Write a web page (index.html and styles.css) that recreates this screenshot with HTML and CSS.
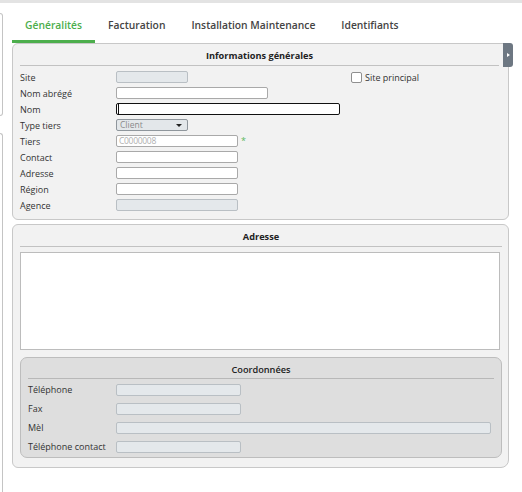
FILE: index.html
```html
<!DOCTYPE html>
<html lang="fr">

<head>
    <meta charset="UTF-8">
    <meta name="viewport" content="width=device-width, initial-scale=1.0">
    <title>Site</title>

    <!--Style-->

    <link rel="stylesheet" href="styles.css">
</head>

<body>
    <div class="topBar"></div>
    <div class="page">
        <div class="sideEdge">
            <div class="sideBoxTop"></div>
            <div class="sideBoxBottom"></div>
        </div>

        <div class="mainContainer">
            <div class="tabs">
                <div class="tab active">Généralités</div>
                <div class="tab">Facturation</div>
                <div class="tab">Installation Maintenance</div>
                <div class="tab">Identifiants</div>
            </div>

            <!--Informations générales-->

            <div class="panel infoPanel">
                <div class="panelTitle">Informations générales</div>
                <div class="panelRule"></div>
                <div class="toggleButton"><span class="toggleArrow"></span></div>

                <div class="row">
                    <label>Site</label>
                    <div class="field disabled w72"></div>
                    <div class="check"><span class="checkBox"></span>Site principal</div>
                </div>
                <div class="row">
                    <label>Nom abrégé</label>
                    <div class="field w152"></div>
                </div>
                <div class="row">
                    <label>Nom</label>
                    <div class="field focused w224"><span class="caret"></span></div>
                </div>
                <div class="row">
                    <label>Type tiers</label>
                    <div class="field select w72">Client<span class="selectArrow"></span></div>
                </div>
                <div class="row">
                    <label>Tiers</label>
                    <div class="field placeholder w122">C0000008</div>
                    <span class="required">*</span>
                </div>
                <div class="row">
                    <label>Contact</label>
                    <div class="field w122"></div>
                </div>
                <div class="row">
                    <label>Adresse</label>
                    <div class="field w122"></div>
                </div>
                <div class="row">
                    <label>Région</label>
                    <div class="field w122"></div>
                </div>
                <div class="row">
                    <label>Agence</label>
                    <div class="field disabled w122"></div>
                </div>
            </div>

            <!--Adresse-->

            <div class="panel addressPanel">
                <div class="panelTitle">Adresse</div>
                <div class="panelRule"></div>
                <div class="addressBox"></div>

                <div class="subPanel">
                    <div class="panelTitle subTitle">Coordonnées</div>
                    <div class="panelRule"></div>

                    <div class="row subRow">
                        <label>Téléphone</label>
                        <div class="field disabled w125"></div>
                    </div>
                    <div class="row subRow">
                        <label>Fax</label>
                        <div class="field disabled w125"></div>
                    </div>
                    <div class="row subRow">
                        <label>Mèl</label>
                        <div class="field disabled wide"></div>
                    </div>
                    <div class="row subRow">
                        <label>Téléphone contact</label>
                        <div class="field disabled w125"></div>
                    </div>
                </div>
            </div>
        </div>
    </div>
</body>

</html>
```

FILE: styles.css
```css
body {
    margin: 0;
    font-family: "Open Sans", "DejaVu Sans", sans-serif;
    color: #333;
    background-color: white;
    width: 522px;
    height: 492px;
    overflow: hidden;
}

.topBar {
    height: 3px;
    background-color: #e3e3e3;
}

.page {
    display: flex;
    height: 489px;
}

/* bits of the neighbour panel cut off at the left */

.sideEdge {
    width: 3px;
    display: flex;
    flex-direction: column;
}

.sideBoxTop {
    margin-top: 10px;
    height: 101px;
    border: 1px solid #c4c4c4;
    border-left: none;
    border-radius: 0 5px 5px 0;
}

.sideBoxBottom {
    margin-top: 17px;
    flex: 1;
    border: 1px solid #c4c4c4;
    border-left: none;
    border-bottom: none;
    border-radius: 0 5px 0 0;
}

.mainContainer {
    margin-left: 9px;
    width: 497px;
}

/* tabs */

.tabs {
    display: flex;
    height: 40px;
}

.tab {
    padding: 0 13px;
    height: 37px;
    line-height: 44px;
    font-size: 10.3px;
    font-weight: 600;
    color: #444;
    border-bottom: 3px solid transparent;
}

.tab.active {
    color: #4cae4c;
    border-bottom-color: #4cae4c;
}

/* panels */

.panel {
    position: relative;
    background-color: #f2f2f2;
    border: 1px solid #c8c8c8;
    border-radius: 6px;
    padding: 0 7px;
}

.infoPanel {
    height: 175px;
    padding-right: 9px;
}

.addressPanel {
    margin-top: 4px;
    height: 242px;
    padding-right: 6px;
    border-bottom-right-radius: 8px;
}

.panelTitle {
    text-align: center;
    font-size: 9.2px;
    font-weight: bold;
    color: #222;
    height: 21px;
    line-height: 24px;
}

.panelRule {
    height: 1px;
    background-color: #c2c2c2;
}

.toggleButton {
    position: absolute;
    top: -1px;
    right: -5px;
    width: 10px;
    height: 24px;
    background-color: #6d7782;
    border-radius: 0 3px 3px 0;
}

.toggleArrow {
    position: absolute;
    top: 10px;
    left: 4px;
    border-left: 3px solid white;
    border-top: 2.5px solid transparent;
    border-bottom: 2.5px solid transparent;
}

/* rows */

.infoPanel .panelRule {
    margin-bottom: 3px;
}

.row {
    display: flex;
    align-items: center;
    height: 16px;
    font-size: 9px;
}

.row label {
    width: 96px;
    flex-shrink: 0;
}

.field {
    box-sizing: border-box;
    height: 12px;
    background-color: white;
    border: 1px solid #a9a9a9;
    border-radius: 2px;
    position: relative;
}

.field.disabled {
    background-color: #e4e8eb;
    border-color: #b9bfc4;
}

.field.focused {
    border-color: #111;
}

.caret {
    position: absolute;
    left: 1px;
    top: 0;
    width: 1px;
    height: 10px;
    background-color: #111;
}

.field.select {
    background-color: #e3e7ea;
    border-color: #8f969c;
    color: #8a8a8a;
    font-size: 8.5px;
    line-height: 9px;
    padding-left: 3px;
}

.selectArrow {
    position: absolute;
    right: 5px;
    top: 4px;
    border-top: 3px solid #222;
    border-left: 3px solid transparent;
    border-right: 3px solid transparent;
}

.field.placeholder {
    color: #b0b0b0;
    font-size: 8.5px;
    line-height: 9px;
    padding-left: 2px;
    letter-spacing: -0.3px;
}

.required {
    color: #5cb85c;
    font-size: 9px;
    margin-left: 3px;
    align-self: flex-start;
    margin-top: 1px;
}

.check {
    margin-left: 163px;
    display: flex;
    align-items: center;
}

.checkBox {
    box-sizing: border-box;
    width: 11px;
    height: 11px;
    background-color: white;
    border: 1px solid #8f8f8f;
    border-radius: 2px;
    margin-right: 3px;
}

.w72 {
    width: 72px;
}

.w122 {
    width: 122px;
}

.w125 {
    width: 125px;
}

.w152 {
    width: 152px;
}

.w224 {
    width: 224px;
}

.wide {
    width: 375px;
}

/* adresse */

.addressBox {
    margin-top: 5px;
    width: 480px;
    height: 98px;
    box-sizing: border-box;
    background-color: white;
    border: 1px solid #bcbcbc;
}

.subPanel {
    margin-top: 7px;
    width: 482px;
    height: 101px;
    box-sizing: border-box;
    background-color: #dedede;
    border: 1px solid #bdbdbd;
    border-radius: 7px;
    padding: 0 7px;
}

.subTitle {
    font-weight: 600;
    height: 20px;
    line-height: 24px;
}

.subPanel .panelRule {
    background-color: #b8b8b8;
    margin-bottom: 1px;
}

.subRow {
    height: 19px;
}

.subRow label {
    width: 88px;
}
```
